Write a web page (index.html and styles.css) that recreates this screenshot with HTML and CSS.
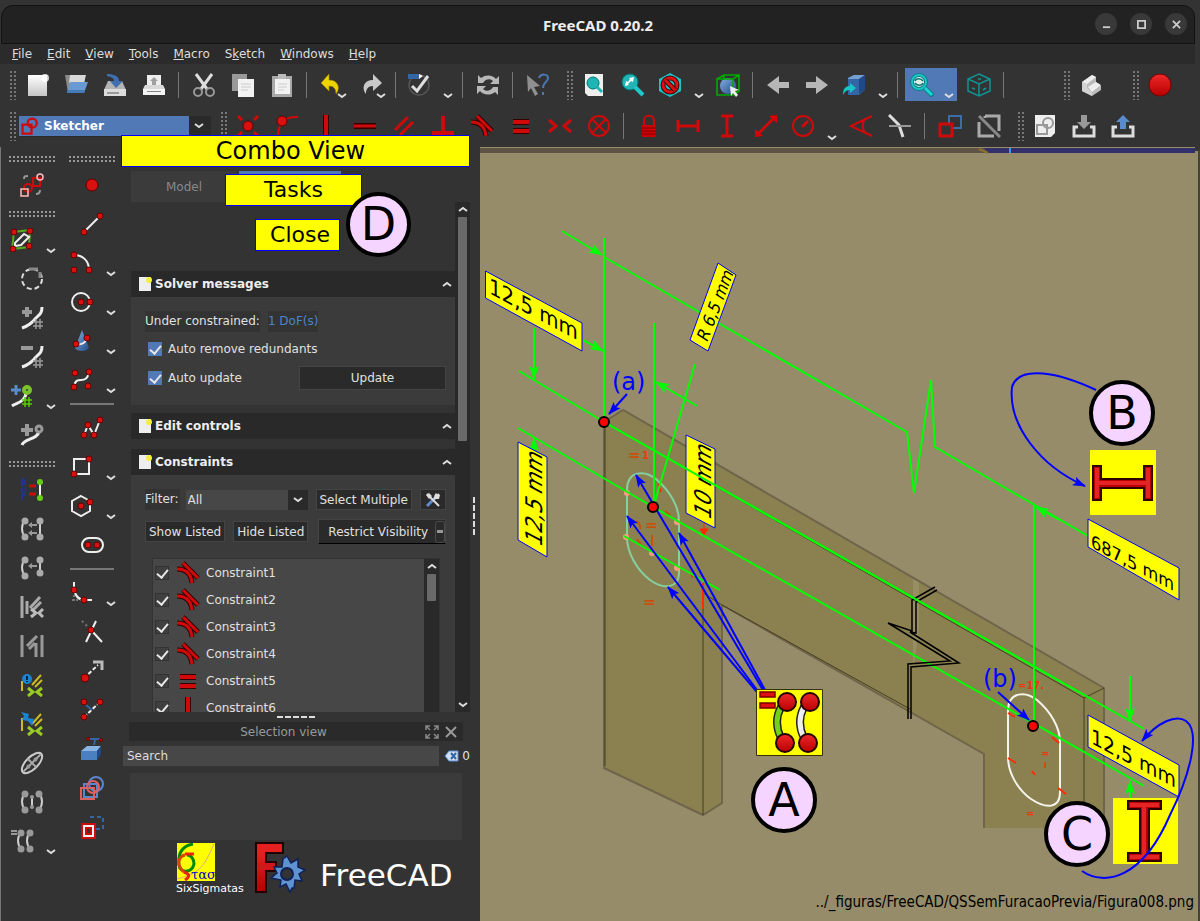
FILE: index.html
```html
<!DOCTYPE html>
<html lang="en">
<head>
  <meta charset="UTF-8" />
  <title>FreeCAD 0.20.2</title>
  <meta name="viewport" content="width=device-width, initial-scale=1.0" />
  <link rel="stylesheet" href="styles.css">
</head>
<body>

<!-- icon sprite -->
<svg class="sprite" aria-hidden="true">
  <defs>
    <linearGradient id="g-blue" x1="0" y1="0" x2="1" y2="1"><stop offset="0" stop-color="#85b0e0"/><stop offset="1" stop-color="#204a87"/></linearGradient>
    <linearGradient id="g-grey" x1="0" y1="0" x2="0" y2="1"><stop offset="0" stop-color="#fff"/><stop offset="1" stop-color="#c4c4c4"/></linearGradient>
    <linearGradient id="g-red" x1="0" y1="0" x2="0" y2="1"><stop offset="0" stop-color="#ef2929"/><stop offset="1" stop-color="#b80000"/></linearGradient>
    <marker id="m-green" viewBox="0 0 14 10" refX="13" refY="5" markerWidth="14" markerHeight="10" markerUnits="userSpaceOnUse" orient="auto"><path d="M0 0L14 5L0 10L3 5z" fill="#0f0"/></marker>
    <marker id="m-blue" viewBox="0 0 14 10" refX="13" refY="5" markerWidth="13" markerHeight="10" markerUnits="userSpaceOnUse" orient="auto"><path d="M0 0L14 5L0 10L3 5z" fill="#00f"/></marker>
  </defs>

  <symbol id="chevron" viewBox="0 0 10 6"><path d="M1 1l4 3 4-3" fill="none" stroke="#ddd" stroke-width="2"/></symbol>
  <symbol id="chevron-up" viewBox="0 0 10 6"><path d="M1 5l4-3 4 3" fill="none" stroke="#ddd" stroke-width="2"/></symbol>

  <!-- file toolbar -->
  <symbol id="new" viewBox="0 0 24 24"><path d="M3 2h19v21H3z" fill="url(#g-grey)"/><circle cx="20" cy="5" r="4" fill="#fff" opacity=".8"/></symbol>
  <symbol id="open" viewBox="0 0 24 24"><path d="M1 2h20l-1 18H4z" fill="#8a8a8a"/><path d="M6 2h16l-2 8H5z" fill="#d8d8d8"/><path d="M6 9h18l-4 11H3z" fill="#6a9ad4"/><path d="M4 17l-1 3h17l1-3z" fill="#477ab8"/></symbol>
  <symbol id="save" viewBox="0 0 24 24"><path d="M5 8h14l4 9v6H1v-6z" fill="#b4b4b4"/><path d="M1 16h22v7H1z" fill="#dcdcdc"/><path d="M4 19h12v2H4z" fill="#999"/><path d="M4 1c7 0 12 2 12 7h4l-7 7-6-7h4c0-3-3-4-7-5z" fill="#3f6fae"/></symbol>
  <symbol id="print" viewBox="0 0 24 24"><path d="M5 2h14v12H5z" fill="#eee"/><path d="M12 4l4 4h-2v5h-4V8H8z" fill="#a0a0a0"/><path d="M3 12h18l2 4v6H1v-6z" fill="#dadada"/><path d="M1 16h22v6H1z" fill="#f4f4f4"/><path d="M5 18h14v1H5z" fill="#888"/></symbol>
  <symbol id="cut" viewBox="0 0 24 24"><path d="M4 1l11 15M20 1L9 16" stroke="#ddd" stroke-width="3" fill="none"/><g fill="none" stroke="#999" stroke-width="2"><circle cx="6" cy="19" r="4"/><circle cx="18" cy="19" r="4"/></g></symbol>
  <symbol id="copy" viewBox="0 0 24 24"><path d="M1 1h15v17H1z" fill="#999"/><path d="M7 6h16v18H7z" fill="#f2f2f2"/><path d="M10 11h10M10 14h10M10 17h7" stroke="#ccc" stroke-width="1"/></symbol>
  <symbol id="paste" viewBox="0 0 24 24"><path d="M2 3h20v21H2z" fill="#a8a8a8"/><path d="M5 6h15v15H5z" fill="#f2f2f2"/><path d="M8 1h8v5H8z" fill="#bbb"/><path d="M8 11h9M8 14h9M8 17h6" stroke="#ccc" stroke-width="1"/></symbol>
  <symbol id="undo" viewBox="0 0 24 24"><path d="M9 1v6c9 0 12 8 7 14 0-5-2-8-7-8v5L1 10z" fill="#edd400" stroke="#a08000" stroke-width=".6"/></symbol>
  <symbol id="redo" viewBox="0 0 24 24"><path d="M14 1v6C5 7 2 15 7 21c0-5 2-8 7-8v5l9-8z" fill="#c9c9c9"/></symbol>
  <symbol id="validate" viewBox="0 0 24 24"><circle cx="12" cy="12" r="10" fill="none" stroke="#555" stroke-width="1.5"/><path d="M1 1h11v5H1z" fill="#3465a4"/><path d="M12 1l4 2-4 3z" fill="#fff"/><path d="M5 13l5 5L21 3" stroke="#ddd" stroke-width="3" fill="none"/></symbol>
  <symbol id="refresh" viewBox="0 0 24 24"><path d="M2 10V2l3 3c5-4 12-3 15 1l3-3v8h-9l3-3c-3-3-8-2-10 2zM22 14v8l-3-3c-5 4-12 3-15-1l-3 3v-8h9l-3 3c3 3 8 2 10-2z" fill="#b8b8b8"/></symbol>
  <symbol id="whatsthis" viewBox="0 0 24 24"><path d="M1 2l13 11-6 1 4 7-3 2-4-8-3 4z" fill="#8f8f8f"/><path d="M13 5c2-5 9-4 9 0s-5 4-5 10M17 19v3" stroke="#4a78b5" stroke-width="2" fill="none"/></symbol>

  <!-- view toolbar -->
  <symbol id="fitall" viewBox="0 0 24 24"><path d="M3 1h18v22H6l-3-3z" fill="#eee"/><circle cx="11" cy="10" r="6" fill="#1fb5b5" stroke="#077" stroke-width="1"/><path d="M15 14l5 5" stroke="#1fb5b5" stroke-width="3"/></symbol>
  <symbol id="fitsel" viewBox="0 0 24 24"><circle cx="9" cy="9" r="8" fill="#1fb5b5" stroke="#077" stroke-width="1"/><path d="M14 14l8 8" stroke="#1ec8c8" stroke-width="4"/><path d="M4 13l1-5 2 1 2-3-1-1 5-1-1 5-2-1-3 3 1 1z" fill="#fff"/></symbol>
  <symbol id="drawstyle" viewBox="0 0 24 24"><path d="M12 0l11 6v12l-11 6-11-6V6z" fill="#1cc3c9"/><circle cx="12" cy="12" r="7" fill="none" stroke="#400" stroke-width="5"/><circle cx="12" cy="12" r="7" fill="none" stroke="#d11" stroke-width="3"/><path d="M7 7l10 10" stroke="#400" stroke-width="5"/><path d="M7 7l10 10" stroke="#d11" stroke-width="3"/></symbol>
  <symbol id="boxsel" viewBox="0 0 24 24"><circle cx="12" cy="13" r="8" fill="url(#g-blue)"/><path d="M1 6h16v16H1zM1 6l7-4h15l-6 4M23 2v16l-6 4M8 2v4" fill="none" stroke="#0a0" stroke-width="1.6"/><path d="M14 13l9 4-4 1 3 4-2 2-3-4-2 3z" fill="#eee"/></symbol>
  <symbol id="back" viewBox="0 0 24 24"><path d="M1 12L13 3v6h10v6H13v6z" fill="#b6b6b6"/></symbol>
  <symbol id="forward" viewBox="0 0 24 24"><path d="M23 12L11 3v6H1v6h10v6z" fill="#b6b6b6"/></symbol>
  <symbol id="linkgo" viewBox="0 0 24 24"><path d="M6 5l6-3h11v15l-6 5H6z" fill="#3465a4"/><path d="M6 5l6-3h11l-6 4H6z" fill="#729fcf"/><path d="M17 6l6-4v15l-6 4z" fill="#204a87"/><path d="M1 22c0-7 3-9 7-9v-3l6 5-6 5v-3c-3 0-5 1-7 5z" fill="#16c6c6"/></symbol>
  <symbol id="sync" viewBox="0 0 24 24"><circle cx="9" cy="9" r="7" fill="#ddeee8" stroke="#0b7f86" stroke-width="4"/><circle cx="9" cy="9" r="7" fill="none" stroke="#19c5c5" stroke-width="2"/><path d="M15 15l8 8" stroke="#0b7f86" stroke-width="5"/><path d="M15 15l7 7" stroke="#19d5d5" stroke-width="3"/><path d="M5 8c1-3 6-3 8 0M13 10c-1 3-6 3-8 0" fill="none" stroke="#177" stroke-width="1.6"/></symbol>
  <symbol id="isocube" viewBox="0 0 24 24"><path d="M12 1l11 5v12l-11 5-11-5V6zM1 6l11 5 11-5M12 11v12" fill="none" stroke="#0d9494" stroke-width="1.5"/><path d="M5 15l3 1M16 17l3-2M11 6h3" stroke="#0d9494" stroke-width="1.6"/></symbol>
  <symbol id="part" viewBox="0 0 24 24"><path d="M3 9l10-7 4 2v5l5 4v4l-9 6-10-5z" fill="#bbb"/><path d="M3 9l10-7 4 2-9 7zM9 14l8-5 5 3-9 7z" fill="#eee"/><path d="M3 9l5 2v4l5 4v4l-10-5z" fill="#d2d2d2"/></symbol>
  <symbol id="record" viewBox="0 0 24 24"><circle cx="12" cy="12" r="11" fill="url(#g-red)" stroke="#700" stroke-width="1"/></symbol>

  <!-- constraints -->
  <symbol id="sketcher" viewBox="0 0 24 24"><g class="ln red w3"><path d="M2 10h12v12H2z"/><circle cx="15" cy="8" r="6"/></g></symbol>
  <symbol id="c-coincident" viewBox="0 0 24 24"><circle class="dot" cx="12" cy="12" r="5"/><path class="ln red w3" d="M2 2l4 4M22 2l-4 4M2 22l4-4M22 22l-4-4"/></symbol>
  <symbol id="c-onobject" viewBox="0 0 24 24"><path class="ln red w2" d="M3 23C3 9 10 2 23 3"/><circle class="dot" cx="7" cy="7" r="5"/></symbol>
  <symbol id="c-vertical" viewBox="0 0 24 24"><path class="ln dark w6" d="M12 1v22"/><path class="ln red w4" d="M12 1v22"/></symbol>
  <symbol id="c-horizontal" viewBox="0 0 24 24"><path class="ln dark w6" d="M1 12h22"/><path class="ln red w3" d="M1 12h22"/></symbol>
  <symbol id="c-parallel" viewBox="0 0 24 24"><path class="ln red w3" d="M3 16L16 3M8 21L21 8"/></symbol>
  <symbol id="c-perp" viewBox="0 0 24 24"><path class="ln red w4" d="M12 2v16M1 19h22"/></symbol>
  <symbol id="c-tangent" viewBox="0 0 24 24"><path class="ln dark" stroke-width="5" d="M7 2l15 15M1 8c9 0 14 5 15 14"/><path class="ln red w3" d="M7 2l15 15M1 8c9 0 14 5 15 14"/></symbol>
  <symbol id="c-equal" viewBox="0 0 24 24"><path class="ln dark w6" d="M4 8h16M4 17h16"/><path class="ln red w4" d="M4 8h16M4 17h16"/></symbol>
  <symbol id="c-symmetric" viewBox="0 0 24 24"><path class="ln red w3" d="M1 6l7 6-7 6M23 6l-7 6 7 6"/></symbol>
  <symbol id="c-block" viewBox="0 0 24 24"><g class="ln red w2"><circle cx="12" cy="12" r="10"/><path d="M5 5l14 14M19 5L5 19"/></g></symbol>
  <symbol id="c-lock" viewBox="0 0 24 24"><path class="ln red w2" d="M7 11V7c0-7 10-7 10 0v4"/><path d="M5 11h14v12H5z" fill="#c00"/><path d="M5 14h14M5 17h14M5 20h14" stroke="#800" stroke-width="1"/></symbol>
  <symbol id="c-distx" viewBox="0 0 24 24"><path class="ln red w3" d="M2 12h20M2 6v12M22 6v12"/></symbol>
  <symbol id="c-disty" viewBox="0 0 24 24"><path class="ln red w3" d="M12 2v20M6 2h12M6 22h12"/></symbol>
  <symbol id="c-distance" viewBox="0 0 24 24"><path class="ln red w3" d="M4 20L20 4"/><path d="M23 1v8l-8-7zM1 23v-8l8 7z" fill="#d00"/></symbol>
  <symbol id="c-radius" viewBox="0 0 24 24"><circle class="ln red w2" cx="12" cy="12" r="10"/><path class="ln red w3" d="M11 13l6-6"/></symbol>
  <symbol id="c-angle" viewBox="0 0 24 24"><path class="ln red w2" d="M23 2L2 12l21 10M16 5c-3 4-3 9 0 14"/></symbol>
  <symbol id="c-snell" viewBox="0 0 24 24"><path class="ln" stroke="#ddd" stroke-width="3" d="M1 1l10 10 4 12"/><path class="ln" stroke="#999" stroke-width="2" d="M1 12h22"/></symbol>
  <symbol id="c-driving" viewBox="0 0 24 24"><path class="ln" stroke="#3a6ea8" stroke-width="2" d="M11 2h12v12H11z"/><path d="M2 10h12v12H2z" fill="#333"/><path class="ln red w3" d="M2 10h12v12H2z"/></symbol>
  <symbol id="c-active" viewBox="0 0 24 24"><path class="ln" stroke="#aaa" stroke-width="3" d="M8 2h14v15M2 8v14h15M8 2v2"/><path class="ln" stroke="#888" stroke-width="3" d="M2 2l21 21"/></symbol>
  <symbol id="sketch" viewBox="0 0 24 24"><path d="M2 1h20v18l-4 4H2z" fill="#eee"/><path class="ln" stroke="#999" stroke-width="2" d="M4 11h10v9H4z"/><circle class="ln" stroke="#999" cx="15" cy="9" r="5"/></symbol>
  <symbol id="import" viewBox="0 0 24 24"><path class="ln" stroke="#ddd" stroke-width="3" d="M6 13H2v9h20v-9h-4"/><path d="M9 1h6v7h4l-7 7-7-7h4z" fill="#999"/></symbol>
  <symbol id="export" viewBox="0 0 24 24"><path class="ln" stroke="#ddd" stroke-width="3" d="M6 13H2v9h20v-9h-4"/><path d="M9 15h6V8h4l-7-7-7 7h4z" fill="#5a8cca"/></symbol>

  <!-- geometry -->
  <symbol id="leave" viewBox="0 0 24 24"><g class="ln red"><path d="M13 5h7v8h-7z"/><circle cx="8" cy="15" r="4"/></g><g class="ln" stroke="#fbb" stroke-width="1.500"><circle cx="20" cy="4" r="3"/><path d="M1 16h7v7H1z"/></g><path class="ln" stroke="#999" d="M4 6c0-3 1-3 4-3M20 17c0 3-1 4-4 4"/></symbol>
  <symbol id="g-point" viewBox="0 0 24 24"><circle class="dot" cx="12" cy="12" r="6"/></symbol>
  <symbol id="g-line" viewBox="0 0 24 24"><path class="ln white" d="M4 20L20 4"/><circle class="dot" cx="4" cy="20" r="3"/><circle class="dot" cx="20" cy="4" r="3"/></symbol>
  <symbol id="g-arc" viewBox="0 0 24 24"><path class="ln white" d="M4 4c9 0 15 6 15 15"/><circle class="dot" cx="4" cy="4" r="3"/><circle class="dot" cx="4" cy="19" r="3"/><circle class="dot" cx="19" cy="19" r="3"/></symbol>
  <symbol id="g-circle" viewBox="0 0 24 24"><circle class="ln white" cx="11" cy="12" r="9"/><circle class="dot" cx="11" cy="12" r="3"/><circle class="dot" cx="20" cy="12" r="3"/></symbol>
  <symbol id="g-conic" viewBox="0 0 24 24"><path d="M12 1l7 18c-2 4-12 4-14 0z" fill="url(#g-blue)"/><path class="ln white" d="M6 15c4 1 9 0 11-6"/><circle class="dot" cx="6" cy="15" r="3"/><circle class="dot" cx="17" cy="9" r="3"/></symbol>
  <symbol id="g-bspline" viewBox="0 0 24 24"><path class="ln white" d="M4 19c2-14 12 0 15-15"/><circle class="dot" cx="5" cy="5" r="3"/><circle class="dot" cx="19" cy="4" r="3"/><circle class="dot" cx="4" cy="19" r="3"/><circle class="dot" cx="18" cy="18" r="3"/></symbol>
  <symbol id="g-polyline" viewBox="0 0 24 24"><path class="ln white" d="M4 19L8 9l6 10 6-15"/><circle class="dot" cx="4" cy="19" r="3"/><circle class="dot" cx="8" cy="9" r="3"/><circle class="dot" cx="14" cy="19" r="3"/><circle class="dot" cx="20" cy="4" r="3"/></symbol>
  <symbol id="g-rect" viewBox="0 0 24 24"><path class="ln white" d="M4 4h15v15H4z"/><circle class="dot" cx="19" cy="4" r="3"/><circle class="dot" cx="4" cy="19" r="3"/></symbol>
  <symbol id="g-hexagon" viewBox="0 0 24 24"><path class="ln white" d="M11 2l9 5v10l-9 5-9-5V7z"/><circle class="dot" cx="11" cy="12" r="3"/><circle class="dot" cx="20" cy="8" r="3"/></symbol>
  <symbol id="g-slot" viewBox="0 0 24 24"><rect class="ln white" x="2" y="5" width="21" height="14" rx="7"/><circle class="dot" cx="8" cy="12" r="3"/><circle class="dot" cx="17" cy="12" r="3"/></symbol>
  <symbol id="g-fillet" viewBox="0 0 24 24"><path class="ln white" d="M4 1v7c1 6 4 11 11 11h7"/><path class="ln" stroke="#777" stroke-dasharray="2 2" d="M2 19h9M4 14v8"/><circle class="dot" cx="4" cy="9" r="3"/><circle class="dot" cx="14" cy="19" r="3"/></symbol>
  <symbol id="g-trim" viewBox="0 0 24 24"><path class="ln white" d="M6 22L16 1M11 10l11 12"/><path class="ln" stroke="#777" stroke-dasharray="2 3" d="M2 1l8 8"/><circle class="dot" cx="11" cy="10" r="3"/></symbol>
  <symbol id="g-extend" viewBox="0 0 24 24"><path class="ln white" stroke-dasharray="4 2" d="M4 19L18 6"/><path class="ln" stroke="#bbb" stroke-width="3" d="M13 3h9v8"/><circle class="dot" cx="5" cy="19" r="4"/></symbol>
  <symbol id="g-split" viewBox="0 0 24 24"><path class="ln white" stroke-dasharray="4 2" d="M4 19L20 4"/><path class="ln" stroke="#3465a4" d="M6 7l6 5"/><circle class="dot" cx="4" cy="4" r="3"/><circle class="dot" cx="20" cy="4" r="3"/><circle class="dot" cx="4" cy="19" r="3"/></symbol>
  <symbol id="g-external" viewBox="0 0 24 24"><path d="M1 14l6-5h14l-4 5z" fill="#8ab4e4"/><path d="M1 14h16v9H1z" fill="#4a7fc0"/><path d="M17 14l4-5v8l-4 6z" fill="#204a87"/><path class="ln" stroke="#3465a4" d="M8 2h12M15 3l-1 5"/><circle class="dot" cx="8" cy="2" r="1.500"/><circle class="dot" cx="21" cy="3" r="1.500"/></symbol>
  <symbol id="g-carbon" viewBox="0 0 24 24"><g class="ln" stroke="#5a86d0"><circle cx="16" cy="8" r="7"/><path d="M4 8h13v13H4z"/></g><g class="ln" stroke="#e06060"><circle cx="13" cy="11" r="6"/><path d="M1 12h13v11H1z"/></g></symbol>
  <symbol id="g-construction" viewBox="0 0 24 24"><path class="ln" stroke="#3465a4" stroke-dasharray="4 3" d="M10 2h13v12H14"/><path class="ln red w6" d="M4 11h9v10H4z"/><path class="ln white" d="M4 11h9v10H4z"/></symbol>

  <!-- b-spline / helpers -->
  <symbol id="b-poly" viewBox="0 0 24 24"><path class="ln" stroke="#5aa81c" d="M4 4l16-2-1 17-17 2z"/><path class="ln white" d="M5 15L14 6l5 3-8 8-6 1z"/><circle class="dot" cx="4" cy="4" r="3"/><circle class="dot" cx="20" cy="3" r="3"/><circle class="dot" cx="19" cy="18" r="3"/><circle class="dot" cx="3" cy="21" r="3"/></symbol>
  <symbol id="b-degree" viewBox="0 0 24 24"><circle class="ln" stroke="#ddd" stroke-dasharray="5 3" cx="12" cy="12" r="10"/><path class="ln" stroke="#888" stroke-width="3" d="M9 2h9M20 5v6"/></symbol>
  <symbol id="b-inc" viewBox="0 0 24 24"><path class="ln white w3" d="M2 22c6-2 11-6 14-10 3-3 6-4 6-11"/><path class="ln" stroke="#999" d="M7 1v10M2 6h10" stroke-width="4"/><path class="ln" stroke="#999" d="M16 13v10M20 13v10M13 16h10M13 20h10" stroke-width="1.500"/></symbol>
  <symbol id="b-dec" viewBox="0 0 24 24"><path class="ln white w3" d="M2 22c6-2 11-6 14-10 3-3 6-4 6-11"/><path class="ln" stroke="#999" d="M1 3h12" stroke-width="4"/><path class="ln" stroke="#999" d="M16 13v10M20 13v10M13 16h10M13 20h10" stroke-width="1.500"/></symbol>
  <symbol id="b-mult" viewBox="0 0 24 24"><path class="ln white w3" d="M2 22c4-3 14-4 14-14"/><path class="ln" stroke="#5a8cca" d="M6 1v10M1 6h10" stroke-width="3"/><circle cx="17" cy="6" r="3" fill="none" stroke="#7cc22a" stroke-width="4"/><path class="ln" stroke="#5c0" d="M15 13v10M19 13v10M12 16h10M12 20h10" stroke-width="1.500"/></symbol>
  <symbol id="b-knot" viewBox="0 0 24 24"><path class="ln white w3" d="M2 22c2-7 16-5 17-14"/><path class="ln" stroke="#999" d="M7 1v12M1 7h12" stroke-width="4"/><circle cx="19" cy="6" r="3" fill="none" stroke="#999" stroke-width="3"/></symbol>
  <symbol id="h-dof" viewBox="0 0 24 24"><path class="ln" stroke="#23358a" d="M2 1v6c4 0 4-6 0-6M3 10a2 2.500 0 1 0 1 0M2 22v-5h4"/><path class="ln red w3" d="M9 8h7M9 16h7"/><path class="ln white" d="M20 4v16"/><circle cx="20" cy="4" r="3" fill="#6c1"/><circle cx="20" cy="20" r="3" fill="#6c1"/></symbol>
  <symbol id="h-conn" viewBox="0 0 24 24"><path class="ln" stroke="#ccc" d="M5 3c-4 5-4 12 0 17M20 4v16"/><path d="M8 8l4-3v2h5v2h-5v2zM8 16l4-3v2h5v2h-5v2z" fill="#999"/><g fill="#aaa"><circle cx="5" cy="4" r="3.500"/><circle cx="20" cy="4" r="3.500"/><circle cx="5" cy="20" r="3.500"/><circle cx="20" cy="20" r="3.500"/></g></symbol>
  <symbol id="h-conn2" viewBox="0 0 24 24"><path class="ln" stroke="#ccc" d="M5 3c-4 5-4 12 0 17M20 4v13"/><path d="M8 10l4-3v2h5v2h-5v2z" fill="#999"/><g fill="#aaa"><circle cx="5" cy="4" r="3.500"/><circle cx="20" cy="4" r="3.500"/><circle cx="5" cy="20" r="3.500"/><circle cx="20" cy="17" r="3.500"/></g></symbol>
  <symbol id="h-geo" viewBox="0 0 24 24"><path class="ln" stroke="#aaa" d="M2 1v22M7 6v13M10 13L20 2M13 15l8-8" stroke-width="3"/><path class="ln" stroke="#bbb" d="M11 14l5 4-5 4M23 14l-4 4 4 4" stroke-width="3"/></symbol>
  <symbol id="h-elem" viewBox="0 0 24 24"><path class="ln" stroke="#999" d="M2 1v22M22 1v22M7 12L17 2M9 15l6-6M16 9v14" stroke-width="3"/></symbol>
  <symbol id="h-redund" viewBox="0 0 24 24"><path class="ln" stroke="#cb2" d="M2 8v10M12 12L21 2M15 14l7-7"/><path class="ln" stroke="#9c2" d="M8 15l5 4-5 4M22 15l-5 4 5 4" stroke-width="3"/><circle cx="7" cy="6" r="5" fill="#1b84d0"/><path d="M7 3v4M7 8v1" stroke="#024" stroke-width="2"/></symbol>
  <symbol id="h-conf" viewBox="0 0 24 24"><path class="ln" stroke="#cb2" d="M2 6v13M12 12L21 2M15 14l7-7"/><path class="ln" stroke="#9c2" d="M8 15l5 4-5 4M22 15l-5 4 5 4" stroke-width="3"/><path d="M1 0l8 2-1 4 6 1-2 7-4-5-6-1 2-4z" fill="#1b84d0"/></symbol>
  <symbol id="h-ellipse" viewBox="0 0 24 24"><g transform="rotate(-45 12 12)"><ellipse class="ln" stroke="#ccc" cx="12" cy="12" rx="13" ry="6"/><path class="ln" stroke="#aaa" d="M0 12h24M12 6v12"/><circle cx="7" cy="12" r="2" fill="#999"/><circle cx="17" cy="12" r="2" fill="#999"/></g></symbol>
  <symbol id="h-sym" viewBox="0 0 24 24"><path class="ln" stroke="#ccc" d="M5 3c-4 5-4 12 0 17M19 3c4 5 4 12 0 17M12 6v12"/><g fill="#999"><circle cx="5" cy="4" r="3.500"/><circle cx="19" cy="4" r="3.500"/><circle cx="5" cy="20" r="3.500"/><circle cx="19" cy="20" r="3.500"/><circle cx="12" cy="7" r="2"/><circle cx="12" cy="17" r="2"/></g></symbol>
  <symbol id="h-clone" viewBox="0 0 24 24"><path class="ln" stroke="#999" d="M1 2h6M1 5h6"/><path class="ln" stroke="#ccc" d="M11 3c-4 5-4 12 0 17M20 3c-4 5-4 12 0 17"/><g fill="#999"><circle cx="11" cy="4" r="3.500"/><circle cx="20" cy="4" r="3.500"/><circle cx="11" cy="20" r="3.500"/><circle cx="20" cy="20" r="3.500"/></g></symbol>

  <symbol id="page" viewBox="0 0 16 16"><path d="M1 1h12v14H1z" fill="#eee"/><circle cx="11" cy="4" r="3" fill="#f5ee3a"/></symbol>
  <symbol id="settings" viewBox="0 0 16 16"><path d="M2 14l8-8" stroke="#5a8cca" stroke-width="3"/><path d="M9 7l5-5M2 2l12 12" stroke="#ddd" stroke-width="2"/><path d="M1 3l3-2 3 3-3 3zM11 1l2 2 2 0-1 4-4 0-1-3z" fill="#ddd"/></symbol>
  <symbol id="float" viewBox="0 0 14 14"><path d="M1 5V1h4M9 1h4v4M13 9v4H9M5 13H1V9M1 1l4 4M13 1L9 5M13 13L9 9M1 13l4-4" stroke="#888" stroke-width="1.500" fill="none"/></symbol>
  <symbol id="close" viewBox="0 0 14 14"><path d="M2 2l10 10M12 2L2 12" stroke="currentColor" stroke-width="2"/></symbol>
  <symbol id="clear" viewBox="0 0 16 14"><path d="M1 7l4-5h9v10H5z" fill="#cfe0f5" stroke="#5a8cca"/><path d="M7 4l5 6M12 4l-5 6" stroke="#3465a4" stroke-width="2"/></symbol>
</svg>

<header class="titlebar">
  <h1>FreeCAD 0.20.2</h1>
  <div class="window-buttons">
    <button aria-label="Minimize"><svg viewBox="0 0 10 10"><path d="M1 8h8"/></svg></button>
    <button aria-label="Maximize"><svg viewBox="0 0 10 10"><path d="M1 1h8v8H1z"/></svg></button>
    <button aria-label="Close"><svg viewBox="0 0 10 10"><path d="M1 1l8 8M9 1L1 9"/></svg></button>
  </div>
</header>

<nav class="menubar">
  <a href="#"><u>F</u>ile</a>
  <a href="#"><u>E</u>dit</a>
  <a href="#"><u>V</u>iew</a>
  <a href="#"><u>T</u>ools</a>
  <a href="#"><u>M</u>acro</a>
  <a href="#">S<u>k</u>etch</a>
  <a href="#"><u>W</u>indows</a>
  <a href="#"><u>H</u>elp</a>
</nav>

<div class="toolbar-row">
  <div class="toolbar">
    <i class="handle"></i>
    <button class="tool" aria-label="New"><svg class="icon"><use href="#new"/></svg></button>
    <button class="tool" aria-label="Open"><svg class="icon"><use href="#open"/></svg></button>
    <button class="tool" aria-label="Save"><svg class="icon"><use href="#save"/></svg></button>
    <button class="tool" aria-label="Print"><svg class="icon"><use href="#print"/></svg></button>
    <i class="sep"></i>
    <button class="tool" aria-label="Cut"><svg class="icon"><use href="#cut"/></svg></button>
    <button class="tool" aria-label="Copy"><svg class="icon"><use href="#copy"/></svg></button>
    <button class="tool" aria-label="Paste"><svg class="icon"><use href="#paste"/></svg></button>
    <i class="sep"></i>
    <button class="tool" aria-label="Undo"><svg class="icon"><use href="#undo"/></svg><svg class="chev over"><use href="#chevron"/></svg></button>
    <button class="tool" aria-label="Redo"><svg class="icon"><use href="#redo"/></svg><svg class="chev over"><use href="#chevron"/></svg></button>
    <i class="sep"></i>
    <button class="tool wide" aria-label="Validate"><svg class="icon"><use href="#validate"/></svg><svg class="chev"><use href="#chevron"/></svg></button>
    <i class="sep"></i>
    <button class="tool" aria-label="Refresh"><svg class="icon"><use href="#refresh"/></svg></button>
    <i class="sep"></i>
    <button class="tool" aria-label="What's this"><svg class="icon"><use href="#whatsthis"/></svg></button>
  </div>
  <div class="toolbar">
    <i class="handle"></i>
    <button class="tool" aria-label="Fit all"><svg class="icon"><use href="#fitall"/></svg></button>
    <button class="tool" aria-label="Fit selection"><svg class="icon"><use href="#fitsel"/></svg></button>
    <button class="tool wide" aria-label="Draw style"><svg class="icon"><use href="#drawstyle"/></svg><svg class="chev"><use href="#chevron"/></svg></button>
    <button class="tool" aria-label="Box selection"><svg class="icon"><use href="#boxsel"/></svg></button>
    <i class="sep"></i>
    <button class="tool" aria-label="Back"><svg class="icon"><use href="#back"/></svg></button>
    <button class="tool" aria-label="Forward"><svg class="icon"><use href="#forward"/></svg></button>
    <button class="tool wide" aria-label="Link actions"><svg class="icon"><use href="#linkgo"/></svg><svg class="chev"><use href="#chevron"/></svg></button>
    <i class="sep"></i>
    <button class="tool wide active" aria-label="Sync view"><svg class="icon"><use href="#sync"/></svg><svg class="chev"><use href="#chevron"/></svg></button>
    <button class="tool" aria-label="Isometric"><svg class="icon"><use href="#isocube"/></svg></button>
    <i class="sep"></i>
  </div>
  <div class="toolbar part-bar">
    <i class="handle"></i>
    <button class="tool" aria-label="Part"><svg class="icon"><use href="#part"/></svg></button>
  </div>
  <div class="toolbar macro-bar">
    <i class="handle"></i>
    <button class="tool" aria-label="Record macro"><svg class="icon"><use href="#record"/></svg></button>
  </div>
</div>

<div class="toolbar-row second">
  <div class="toolbar">
    <i class="handle"></i>
    <div class="workbench">
      <svg class="icon"><use href="#sketcher"/></svg>
      <select aria-label="Workbench"><option>Sketcher</option></select>
      <svg class="chev"><use href="#chevron"/></svg>
    </div>
  </div>
  <div class="toolbar">
    <i class="handle"></i>
    <button class="tool" aria-label="Coincident"><svg class="icon"><use href="#c-coincident"/></svg></button>
    <button class="tool" aria-label="Point on object"><svg class="icon"><use href="#c-onobject"/></svg></button>
    <button class="tool" aria-label="Vertical"><svg class="icon"><use href="#c-vertical"/></svg></button>
    <button class="tool" aria-label="Horizontal"><svg class="icon"><use href="#c-horizontal"/></svg></button>
    <button class="tool" aria-label="Parallel"><svg class="icon"><use href="#c-parallel"/></svg></button>
    <button class="tool" aria-label="Perpendicular"><svg class="icon"><use href="#c-perp"/></svg></button>
    <button class="tool" aria-label="Tangent"><svg class="icon"><use href="#c-tangent"/></svg></button>
    <button class="tool" aria-label="Equal"><svg class="icon"><use href="#c-equal"/></svg></button>
    <button class="tool" aria-label="Symmetric"><svg class="icon"><use href="#c-symmetric"/></svg></button>
    <button class="tool" aria-label="Block"><svg class="icon"><use href="#c-block"/></svg></button>
    <i class="sep"></i>
    <button class="tool" aria-label="Lock"><svg class="icon"><use href="#c-lock"/></svg></button>
    <button class="tool" aria-label="Horizontal distance"><svg class="icon"><use href="#c-distx"/></svg></button>
    <button class="tool" aria-label="Vertical distance"><svg class="icon"><use href="#c-disty"/></svg></button>
    <button class="tool" aria-label="Distance"><svg class="icon"><use href="#c-distance"/></svg></button>
    <button class="tool wide" aria-label="Radius"><svg class="icon"><use href="#c-radius"/></svg><svg class="chev"><use href="#chevron"/></svg></button>
    <button class="tool" aria-label="Angle"><svg class="icon"><use href="#c-angle"/></svg></button>
    <button class="tool" aria-label="Refraction"><svg class="icon"><use href="#c-snell"/></svg></button>
    <i class="sep"></i>
    <button class="tool" aria-label="Toggle driving"><svg class="icon"><use href="#c-driving"/></svg></button>
    <button class="tool" aria-label="Toggle active"><svg class="icon"><use href="#c-active"/></svg></button>
  </div>
  <div class="toolbar">
    <i class="handle"></i>
    <button class="tool" aria-label="Sketch"><svg class="icon"><use href="#sketch"/></svg></button>
    <button class="tool" aria-label="Import"><svg class="icon"><use href="#import"/></svg></button>
    <button class="tool" aria-label="Export"><svg class="icon"><use href="#export"/></svg></button>
  </div>
</div>

<main>
  <div class="toolbox">
    <i class="grip"></i>
    <button class="vtool" aria-label="Leave sketch"><svg class="icon"><use href="#leave"/></svg></button>
    <i class="grip"></i>
    <button class="vtool drop" aria-label="Control polygon"><svg class="icon"><use href="#b-poly"/></svg><svg class="chev"><use href="#chevron"/></svg></button>
    <button class="vtool" aria-label="Convert to B-spline"><svg class="icon"><use href="#b-degree"/></svg></button>
    <button class="vtool" aria-label="Increase degree"><svg class="icon"><use href="#b-inc"/></svg></button>
    <button class="vtool" aria-label="Decrease degree"><svg class="icon"><use href="#b-dec"/></svg></button>
    <button class="vtool drop" aria-label="Knot multiplicity"><svg class="icon"><use href="#b-mult"/></svg><svg class="chev"><use href="#chevron"/></svg></button>
    <button class="vtool" aria-label="Insert knot"><svg class="icon"><use href="#b-knot"/></svg></button>
    <i class="grip"></i>
    <button class="vtool" aria-label="Select DoF"><svg class="icon"><use href="#h-dof"/></svg></button>
    <button class="vtool" aria-label="Close shape"><svg class="icon"><use href="#h-conn"/></svg></button>
    <button class="vtool" aria-label="Connect edges"><svg class="icon"><use href="#h-conn2"/></svg></button>
    <button class="vtool" aria-label="Select constraints"><svg class="icon"><use href="#h-geo"/></svg></button>
    <button class="vtool" aria-label="Select elements"><svg class="icon"><use href="#h-elem"/></svg></button>
    <button class="vtool" aria-label="Select redundant"><svg class="icon"><use href="#h-redund"/></svg></button>
    <button class="vtool" aria-label="Select conflicting"><svg class="icon"><use href="#h-conf"/></svg></button>
    <button class="vtool" aria-label="Internal geometry"><svg class="icon"><use href="#h-ellipse"/></svg></button>
    <button class="vtool" aria-label="Symmetry"><svg class="icon"><use href="#h-sym"/></svg></button>
    <button class="vtool drop" aria-label="Clone"><svg class="icon"><use href="#h-clone"/></svg><svg class="chev"><use href="#chevron"/></svg></button>
  </div>

  <div class="toolbox">
    <i class="grip"></i>
    <button class="vtool" aria-label="Point"><svg class="icon"><use href="#g-point"/></svg></button>
    <button class="vtool" aria-label="Line"><svg class="icon"><use href="#g-line"/></svg></button>
    <button class="vtool drop" aria-label="Arc"><svg class="icon"><use href="#g-arc"/></svg><svg class="chev"><use href="#chevron"/></svg></button>
    <button class="vtool drop" aria-label="Circle"><svg class="icon"><use href="#g-circle"/></svg><svg class="chev"><use href="#chevron"/></svg></button>
    <button class="vtool drop" aria-label="Conic"><svg class="icon"><use href="#g-conic"/></svg><svg class="chev"><use href="#chevron"/></svg></button>
    <button class="vtool drop" aria-label="B-spline"><svg class="icon"><use href="#g-bspline"/></svg><svg class="chev"><use href="#chevron"/></svg></button>
    <i class="vsep"></i>
    <button class="vtool" aria-label="Polyline"><svg class="icon"><use href="#g-polyline"/></svg></button>
    <button class="vtool drop" aria-label="Rectangle"><svg class="icon"><use href="#g-rect"/></svg><svg class="chev"><use href="#chevron"/></svg></button>
    <button class="vtool drop" aria-label="Polygon"><svg class="icon"><use href="#g-hexagon"/></svg><svg class="chev"><use href="#chevron"/></svg></button>
    <button class="vtool" aria-label="Slot"><svg class="icon"><use href="#g-slot"/></svg></button>
    <i class="vsep"></i>
    <button class="vtool drop" aria-label="Fillet"><svg class="icon"><use href="#g-fillet"/></svg><svg class="chev"><use href="#chevron"/></svg></button>
    <button class="vtool" aria-label="Trim"><svg class="icon"><use href="#g-trim"/></svg></button>
    <button class="vtool" aria-label="Extend"><svg class="icon"><use href="#g-extend"/></svg></button>
    <button class="vtool" aria-label="Split"><svg class="icon"><use href="#g-split"/></svg></button>
    <button class="vtool" aria-label="External geometry"><svg class="icon"><use href="#g-external"/></svg></button>
    <button class="vtool" aria-label="Carbon copy"><svg class="icon"><use href="#g-carbon"/></svg></button>
    <button class="vtool" aria-label="Construction"><svg class="icon"><use href="#g-construction"/></svg></button>
  </div>

  <section class="combo-view">
    <div class="note note-combo">Combo View</div>
    <div class="tabs">
      <button class="tab">Model</button>
      <button class="tab selected" aria-label="Tasks"></button>
    </div>
    <div class="note note-tasks">Tasks</div>
    <div class="note note-close">Close</div>
    <div class="badge">D</div>

    <div class="scroll-area">
      <div class="tasks">
        <h2 class="task-head"><svg class="small"><use href="#page"/></svg>Solver messages<svg class="chev"><use href="#chevron-up"/></svg></h2>
        <div class="task-body solver">
          <p><span class="tag">Under constrained:</span><a href="#" class="tag">1 DoF(s)</a></p>
          <label><input type="checkbox" class="blue" checked>Auto remove redundants</label>
          <div class="row">
            <label><input type="checkbox" class="blue" checked>Auto update</label>
            <button class="btn update">Update</button>
          </div>
        </div>

        <h2 class="task-head"><svg class="small"><use href="#page"/></svg>Edit controls<svg class="chev"><use href="#chevron-up"/></svg></h2>
        <h2 class="task-head last"><svg class="small"><use href="#page"/></svg>Constraints<svg class="chev"><use href="#chevron-up"/></svg></h2>
        <div class="task-body constraints">
          <div class="row filter">
            <label class="tag" for="filter">Filter:</label>
            <div class="select"><select id="filter"><option>All</option></select><svg class="chev"><use href="#chevron"/></svg></div>
            <button class="btn multiple">Select Multiple</button>
            <button class="btn cfg" aria-label="Settings"><svg class="small"><use href="#settings"/></svg></button>
          </div>
          <div class="row visibility">
            <button class="btn">Show Listed</button>
            <button class="btn">Hide Listed</button>
            <button class="btn restrict">Restrict Visibility<span class="arrow"></span></button>
          </div>
          <div class="list">
            <ul>
              <li><label><input type="checkbox" checked><svg class="icon"><use href="#c-tangent"/></svg>Constraint1</label></li>
              <li><label><input type="checkbox" checked><svg class="icon"><use href="#c-tangent"/></svg>Constraint2</label></li>
              <li><label><input type="checkbox" checked><svg class="icon"><use href="#c-tangent"/></svg>Constraint3</label></li>
              <li><label><input type="checkbox" checked><svg class="icon"><use href="#c-tangent"/></svg>Constraint4</label></li>
              <li><label><input type="checkbox" checked><svg class="icon"><use href="#c-equal"/></svg>Constraint5</label></li>
              <li><label><input type="checkbox" checked><svg class="icon"><use href="#c-vertical"/></svg>Constraint6</label></li>
            </ul>
            <div class="scrollbar"><svg class="chev"><use href="#chevron-up"/></svg><span class="thumb short"></span></div>
          </div>
        </div>
      </div>
      <div class="scrollbar"><svg class="chev"><use href="#chevron-up"/></svg><span class="thumb"></span><svg class="chev"><use href="#chevron"/></svg></div>
    </div>

    <i class="splitter"></i>

    <div class="sel-head">
      <span>Selection view</span>
      <button aria-label="Float"><svg><use href="#float"/></svg></button>
      <button aria-label="Close"><svg><use href="#close"/></svg></button>
    </div>
    <div class="search">
      <input type="text" placeholder="Search" aria-label="Search">
      <button aria-label="Clear"><svg><use href="#clear"/></svg></button>
      <span>0</span>
    </div>
    <div class="sel-list"></div>

    <footer class="logos">
      <figure>
        <svg viewBox="0 0 38 38" width="38" height="38">
          <path d="M0 0h38v38H0z" fill="#ff0"/>
          <path d="M0 36C22 30 26 26 37 1" fill="none" stroke="#da8"/>
          <path d="M16 1C4 3 1 12 2 22c1 9 13 8 15-1 0-5-3-9-7-9" fill="none" stroke="#080" stroke-width="3"/>
          <path d="M17 11H8" stroke="#e21" stroke-width="3"/>
          <path d="M8 12c-5 1-7 6-6 10 1 3 2 5 5 7" fill="none" stroke="#d40" stroke-width="3"/>
          <path d="M7 29c5 2 7 4 1 8" fill="none" stroke="#e21" stroke-width="3"/>
          <text x="14" y="36" class="tau">τασ</text>
        </svg>
        <figcaption>SixSigmatas</figcaption>
      </figure>
      <svg class="fc-logo" viewBox="0 0 52 52" width="52" height="52">
        <g fill="#200"><rect width="12" height="51"/><rect width="29" height="12"/><rect y="19" width="22" height="11"/></g>
        <g fill="url(#g-red)"><rect x="2" y="2" width="8" height="47"/><rect x="2" y="2" width="25" height="8" fill="#e42020"/><rect x="2" y="21" width="18" height="7" fill="#d01818"/></g>
        <g transform="translate(32 32)">
          <path d="M0-18l4 7 7-4 0 8 7 3-6 4 3 7-7-1-1 8h-2l-2 4-4-8-6 3 1-7-10-2 6-5-3-6 8 0 1-8z" fill="#5e93cf" stroke="#10205a" stroke-width="1.500"/>
          <circle r="6" fill="#333" stroke="#10205a" stroke-width="2"/>
        </g>
      </svg>
      <strong>FreeCAD</strong>
    </footer>
  </section>

  <i class="vsplitter"></i>

  <section class="viewport">
    <svg viewBox="480 147 720 774" preserveAspectRatio="xMinYMin slice">
      <path d="M480 147h720v774H480z" fill="#968c69"/>
      <path d="M480 148h510v5H480z" fill="#5f5343"/><path d="M984 148h211v5H988z" fill="#332f6b"/>
      <path d="M979 149l9 4" stroke="#8c7430" stroke-width="2"/><path d="M1010 148v5" stroke="#2e9af0" stroke-width="2"/>
      <path d="M1195 147h5v4h-5z" fill="#333"/><path d="M1199 150v771" stroke="#45423a" stroke-width="2"/>

      <!-- solid -->
      <path d="M604 422L623 410 1104 688V828H984V754L722 605V803L703 815 604 768z" fill="#8b8150"/>
      <path d="M913 578l6 4v46l-6 44z" fill="#a49b78" opacity=".5"/>
      <g class="edge"><path d="M604 422L623 410 1104 688V820M604 422V768L703 815 722 803V605M722 605L984 754V828"/></g>
      <g class="edge inner"><path d="M703 815V593L722 605 910 709M604 422L1084 698V810M1084 698l20-10M605 424V766"/></g>

      <!-- slots -->
      <path class="slot" d="M627 490C627 470 645 470 656 479 669 490 679 506 679 521V573C679 588 664 590 650 580 637 570 627 553 627 537z" stroke="#86cf9f"/>
      <path class="slot" d="M1008 711C1008 691 1026 691 1037 700 1050 711 1060 727 1060 742V792C1060 809 1046 809 1031 799 1018 790 1008 773 1008 757z" stroke="#f4f4ea"/>

      <!-- constraint marks -->
      <g class="marks">
        <text x="628" y="460">=</text><text x="642" y="459" class="tiny">1</text><text x="645" y="530">=</text><text x="643" y="607">=</text>
        <text x="1018" y="689" class="tiny">=17.</text><text x="1041" y="757" class="tiny">=</text><text x="1026" y="817" class="tiny">=</text>
        <path d="M652 535v11M636 521q5 3 4 8M637 539l4 6M665 511l5 4M1045 762v6M690 572l3 6"/>
      </g>
      <path d="M1008 713l7 4M1008 758l8 5M1052 737l7 6M1058 788l8 6M1032 771l3 4M658 484l3 8M703 583v26" stroke="#ff2a00" stroke-width="2"/>
      <path d="M704 523v6h-4l4 6 4-6h-4" fill="#ff2a00" stroke="#ff2a00"/>
      <g fill="#ff9a80"><circle cx="627" cy="493" r="3"/><circle cx="626" cy="537" r="3"/><circle cx="677" cy="522" r="3"/><circle cx="677" cy="568" r="3"/><circle cx="652" cy="553" r="3"/></g>

      <!-- dimensions -->
      <g class="dim">
        <path d="M604 238V422M604 257L907 432 914 493 931 380 935 447 1100 543"/>
        <path d="M519 371L604 422 1144 729M518 428L653 507 1144 786"/>
        <path d="M654 323V507M695 364L654 505M1034 505V720M624 536L720 590"/>
        <path class="arr" d="M562 231L602 255"/><path class="arr" d="M583 340L603 351"/>
        <path class="arr" d="M534 328V379"/><path class="arr" d="M534 450V438"/>
        <path class="arr" d="M697 406L656 382"/><path class="arr" d="M1060 520L1036 507"/>
        <path class="arr" d="M1130 676V721"/><path class="arr" d="M1130 798V781"/>
      </g>

      <!-- break line -->
      <path d="M935 587L912 600V631L888 623 950 661 908 664V719M937 590L916 602V633L910 632 959 663 911 667V719" fill="none" stroke="#000" stroke-width="1.500"/>

      <!-- dimension labels -->
      <g class="lbl">
        <path d="M485.500 271L582 323V351L485.500 298z"/><text transform="translate(489 293) skewY(28)" font-size="22">12,5 mm</text>
        <path d="M518 442L547 457V557L518 540z"/><text transform="translate(542 548) skewY(28) rotate(-90)" font-size="23">12,5 mm</text>
        <path d="M686 435L715 449V528L686 513z"/><text transform="translate(711 521) skewY(28) rotate(-90)" font-size="23">10 mm</text>
        <path d="M718 263L736 275 708 351 690 340z"/><text transform="translate(707 343) rotate(-69) skewX(-12)" font-size="17">R 6,5 mm</text>
        <path d="M1088 519L1179 568V600L1088 547z"/><text transform="translate(1091 547) skewY(28)" font-size="18">687,5 mm</text>
        <path d="M1088 715L1179 765V797L1088 747z"/><text transform="translate(1091 743) skewY(28)" font-size="21">12,5 mm</text>
      </g>
      <path d="M604 422L1084 695" stroke="#0f0" stroke-width="2"/>

      <!-- leaders -->
      <g class="leader">
        <path d="M757 692L668 587"/><path d="M757 690L627 516"/><path d="M765 690L679 533"/><path d="M763 690L636 475"/>
        <path d="M627 394L609 414"/><path d="M998 692L1029 720"/>
      </g>
      <text x="612" y="390" class="ref">(a)</text>
      <text x="983" y="687" class="ref">(b)</text>
      <g fill="red" stroke="#000" stroke-width="2"><circle cx="604" cy="422" r="5"/><circle cx="653" cy="507" r="5"/><circle cx="1033" cy="726" r="5"/></g>

      <!-- command icons -->
      <path d="M756.500 689.500h66v66h-66z" fill="#ff0" stroke="#330"/>
      <g fill="#e01010" stroke="#700" stroke-width="1.500"><path d="M760 692h15v5h-15zM760 703h15v5h-15z"/></g>
      <g fill="none" stroke-linecap="round"><path d="M781 707q-8 15 0 31M804 707q-8 15 0 31" stroke="#222" stroke-width="8"/><path d="M781 707q-8 15 0 31" stroke="#73d216" stroke-width="5"/><path d="M804 707q-8 15 0 31" stroke="#eee" stroke-width="5"/></g>
      <g fill="url(#g-red)" stroke="#200" stroke-width="2"><circle cx="787" cy="702" r="9"/><circle cx="810" cy="702" r="9"/><circle cx="785" cy="743" r="9"/><circle cx="808" cy="743" r="9"/></g>
      <path d="M1090 450h66v65h-66z" fill="#ff0"/>
      <path d="M1093 466h8v13h43v-13h8v34h-8v-12h-43v12h-8z" fill="#b80000" stroke="#300" stroke-width="2"/>
      <path d="M1097 468v30M1148 468v30M1097 483h51" stroke="#e42424" stroke-width="4"/>
      <path d="M1113 798h65v66h-65z" fill="#ff0"/>
      <path d="M1128 801h33v8h-12v44h12v8h-33v-8h12v-44h-12z" fill="#b80000" stroke="#300" stroke-width="2"/>
      <path d="M1130 805h29M1130 857h29M1144 805v52" stroke="#e42424" stroke-width="4"/>
      <g class="leader">
        <path d="M1096 390C1060 373 1019 364 1012 387 1008 425 1040 466 1085 486"/>
        <path d="M1082 871C1105 887 1143 878 1170 815 1190 775 1201 732 1186 721 1176 714 1158 722 1142 741"/>
      </g>

      <g class="mark">
        <circle cx="784" cy="800" r="31"/><text x="784" y="816">A</text>
        <circle cx="1122" cy="413" r="31"/><text x="1122" y="429">B</text>
        <circle cx="1077" cy="834" r="31"/><text x="1077" y="850">C</text>
      </g>
      <text x="1194" y="907" class="path">../_figuras/FreeCAD/QSSemFuracaoPrevia/Figura008.png</text>
    </svg>
  </section>
</main>

</body>
</html>
```

FILE: styles.css
```css
* { box-sizing: border-box; }
body { margin: 0; min-height: 100vh; display: flex; flex-direction: column; background: #333; color: #e0e0e0; font: 12px "DejaVu Sans", sans-serif; }
button, select, input { font: inherit; color: inherit; margin: 0; padding: 0; border: none; background: none; }
h1, h2, p, ul, figure { margin: 0; padding: 0; }
svg { display: block; flex: none; }
.sprite { position: absolute; width: 0; height: 0; }
.icon { width: 24px; height: 24px; stroke-width: 2; }
.small { width: 16px; height: 16px; }
.chev { width: 10px; height: 6px; }

/* strokes used by the icon sprite */
.ln { fill: none; }
.red { stroke: #cf0a0a; }
.dark { stroke: #300; }
.white { stroke: #eee; }
.w2 { stroke-width: 2; }
.w3 { stroke-width: 3; }
.w4 { stroke-width: 4; }
.w6 { stroke-width: 6; }
.dot { fill: #d81010; stroke: #600; stroke-width: 1; }

/* window frame */
.titlebar { height: 39px; margin: 5px 5px 0 1px; border: 1px solid #111; border-radius: 12px 12px 0 0; background: #222; display: flex; align-items: center; position: relative; }
.titlebar h1 { flex: 1; text-align: center; font: bold 15px "Noto Sans", sans-serif; color: #eee; }
.window-buttons { position: absolute; right: 7px; top: 7px; display: flex; gap: 13px; }
.window-buttons button { width: 22px; height: 22px; border-radius: 50%; background: #393939; display: flex; align-items: center; justify-content: center; }
.window-buttons svg { width: 9px; height: 9px; fill: none; stroke: #ccc; stroke-width: 2; }
.menubar { height: 20px; margin-right: 5px; padding-left: 12px; display: flex; align-items: center; gap: 15px; background: #2b2b2b; }
.menubar a { color: #ddd; text-decoration: none; }

/* toolbars */
.toolbar-row { height: 41px; display: flex; }
.toolbar-row.second { height: 42px; }
.toolbar { display: flex; align-items: center; padding-left: 9px; }
.part-bar { padding-left: 54px; }
.macro-bar { padding-left: 22px; }
.handle { width: 8px; height: 30px; background: radial-gradient(circle, #777 1px, transparent 1px) 0 0 / 4px 4px; }
.sep { width: 11px; height: 26px; background: linear-gradient(#777, #777) center / 1px 100% no-repeat; }
.tool { width: 39px; height: 33px; display: flex; align-items: center; justify-content: center; position: relative; }
.tool .over { position: absolute; right: 4px; bottom: 2px; }
.tool.wide { width: 56px; justify-content: space-between; padding: 0 4px 0 6px; }
.tool.wide .chev { align-self: flex-end; margin-bottom: 2px; }
.tool.active { width: 52px; margin: 0 2px; padding: 0 3px 0 5px; background: #5179b5; }
.workbench { width: 192px; height: 21px; display: flex; align-items: center; position: relative; margin-left: 2px; background: #2a2a2a; }
.workbench .icon { position: absolute; left: 2px; width: 18px; height: 18px; }
.workbench select { width: 170px; height: 20px; padding-left: 25px; appearance: none; background: #5179b5; color: #fff; font-weight: bold; }
.workbench .chev { margin-left: 5px; }

main { flex: 1; display: flex; border-left: 1px solid #777; }
.toolbox { width: 48px; margin-left: 7px; padding-top: 2px; display: flex; flex-direction: column; }
.toolbox + .toolbox { margin-left: 12px; }
.grip { width: 48px; height: 8px; margin: 6px 0 2px; background: radial-gradient(circle, #999 1px, transparent 1px) 0 0 / 4px 4px; }
.vtool { height: 39px; display: flex; align-items: center; justify-content: center; }
.vtool.drop { justify-content: space-between; padding-left: 2px; }
.vtool.drop .chev { align-self: flex-end; margin-bottom: 5px; }
.vsep { height: 9px; margin: 0 2px; background: linear-gradient(#777, #777) center / 100% 2px no-repeat; }

/* combo view */
.combo-view { width: 348px; margin-left: 6px; position: relative; display: flex; flex-direction: column; }
.note { position: absolute; z-index: 1; background: #ff0; color: #000; border: 1px solid #00f; font-size: 22px; line-height: 30px; text-align: center; }
.note-combo { left: -1px; right: 0; top: -12px; font-size: 24px; padding-right: 10px; }
.note-tasks { left: 103px; top: 27px; width: 137px; }
.note-close { left: 133px; top: 72px; width: 85px; padding-left: 5px; }
.badge { position: absolute; z-index: 1; left: 224px; top: 45px; width: 65px; height: 65px; border: 4px solid #000; border-radius: 50%; background: #f5d5ff; color: #000; font-size: 46px; line-height: 56px; text-align: center; }
.tabs { display: flex; gap: 2px; margin: 24px 0 0 9px; }
.tab { width: 106px; height: 31px; background: #3b3b3b; color: #888; }
.tab.selected { width: 102px; border-top: 3px solid #5179b5; background: #333; }
.scroll-area { height: 510px; margin-left: 9px; display: flex; overflow: hidden; }
.tasks { flex: 1; padding-top: 69px; overflow: hidden; }
.task-head { height: 26px; display: flex; align-items: center; gap: 1px; padding: 0 3px 0 7px; margin-top: 8px; background: #292929; font-size: 12px; color: #eee; }
.task-head:first-child { margin-top: 0; }
.task-head.last { margin-top: 10px; }
.task-head .chev { margin-left: auto; }
.task-body { background: #3b3b3b; }
.solver { height: 108px; padding: 14px 9px 0 14px; display: flex; flex-direction: column; gap: 6px; }
.solver p { display: flex; gap: 8px; }
.solver label { display: flex; align-items: center; height: 22px; padding-left: 3px; }
.solver .row { justify-content: space-between; }
.tag { background: #333; line-height: 21px; white-space: nowrap; }
.tag[href] { color: #4a86c8; text-decoration: none; }
.row { display: flex; align-items: center; }
.btn { height: 21px; padding: 0 3px; background: #2a2a2a; border: 1px solid #444; white-space: nowrap; }
.update { width: 147px; height: 24px; }
input[type=checkbox] { appearance: none; width: 14px; height: 14px; margin-right: 7px; border: 1px solid #333; background: #3f3f3f; display: flex; justify-content: center; }
input[type=checkbox]::after { content: ""; width: 5px; height: 9px; border: solid #e8e8e8; border-width: 0 2px 2px 0; transform: rotate(40deg); }
input[type=checkbox].blue { background: #5179b5; border-color: #5179b5; margin-right: 6px; }
.constraints { height: 240px; padding: 14px 9px 0 14px; }
.filter .tag { padding-right: 1px; }
.select { flex: 1; display: flex; align-items: center; margin: 0 8px 0 6px; background: #2a2a2a; padding-right: 5px; }
.select select { flex: 1; height: 20px; margin-right: 5px; padding-left: 2px; appearance: none; background: #474747; }
.cfg { width: 26px; margin-left: 8px; padding-left: 4px; }
.visibility { margin-top: 9px; gap: 8px; }
.restrict { flex: 1; height: 25px; margin-left: 2px; padding: 0 0 0 9px; display: flex; align-items: center; justify-content: space-between; border-bottom: 1px solid #000; }
.arrow { width: 10px; height: 22px; border: 1px solid #4a4a4a; border-radius: 3px; background: linear-gradient(#999, #999) center / 6px 3px no-repeat; }
.list { height: 170px; margin: 14px 6px 0 7px; display: flex; background: #474747; border: 1px solid #333; }
.list ul { flex: 1; list-style: none; }
.list label { height: 27px; display: flex; align-items: center; padding-left: 2px; }
.list .icon { margin-right: 6px; }
.scrollbar { width: 15px; padding: 4px 0; background: #292929; display: flex; flex-direction: column; align-items: center; }
.thumb { width: 9px; height: 224px; margin: 5px 0 auto; background: #696969; border-radius: 1px; }
.thumb.short { height: 27px; }
.splitter { width: 40px; height: 2px; margin: 4px 0 4px 155px; background: repeating-linear-gradient(90deg, #ddd 0 6px, transparent 6px 8px); }
.sel-head { height: 19px; margin: 0 7px; padding-right: 5px; display: flex; align-items: center; gap: 5px; background: #2a2a2a; color: #999; }
.sel-head span { flex: 1; padding-left: 18px; text-align: center; }
.sel-head svg { width: 14px; height: 14px; }
.search { display: flex; align-items: center; margin: 5px 0 0 1px; }
.search input { flex: 1; min-width: 0; height: 20px; padding-left: 4px; background: #474747; }
.search input::placeholder { color: #ddd; opacity: 1; }
.search svg { width: 16px; height: 14px; margin: 0 2px 0 5px; }
.sel-list { height: 67px; margin: 7px 8px 0; background: #3b3b3b; }
.logos { display: flex; padding: 2px 0 0 54px; color: #fff; }
.logos figure { width: 66px; }
.logos figure svg { margin: 1px 0 1px 1px; }
.logos figcaption { font-size: 11px; line-height: 14px; white-space: nowrap; }
.tau { font: 13px "DejaVu Serif", serif; fill: #00c; }
.fc-logo { margin: 0 13px; }
.logos strong { font-size: 31px; font-weight: normal; line-height: 66px; }
.vsplitter { width: 10px; background: repeating-linear-gradient(#ddd 0 6px, transparent 6px 8px) 3px 350px / 2px 40px no-repeat; }

/* 3D view */
.viewport { flex: 1; position: relative; overflow: hidden; }
.viewport > svg { position: absolute; inset: 0; width: 100%; height: 100%; }
.edge { fill: none; stroke: #6f654b; stroke-width: 2; }
.edge.inner { stroke: #453f20; stroke-width: 1; }
.slot { fill: none; stroke-width: 2; }
.marks { font-size: 15px; font-weight: bold; fill: #c8500a; stroke: none; }
.marks path { fill: none; stroke: #c8500a; stroke-width: 2; }
.marks .tiny { font-size: 10px; fill: #e83a10; }
.dim path { fill: none; stroke: #0f0; stroke-width: 2; }
.dim .arr { marker-end: url(#m-green); }
.lbl path { fill: #ff0; stroke: #00f; }
.lbl text { font-family: "DejaVu Sans Condensed", "DejaVu Sans", sans-serif; fill: #000; }
.leader path { fill: none; stroke: #00f; stroke-width: 2; marker-end: url(#m-blue); }
.ref { font-size: 24px; fill: #00f; }
.mark circle { fill: #f5d5ff; stroke: #000; stroke-width: 4; }
.mark text { font-size: 46px; text-anchor: middle; }
.path { font: 15px "DejaVu Sans Condensed", "DejaVu Sans", sans-serif; text-anchor: end; }
```
